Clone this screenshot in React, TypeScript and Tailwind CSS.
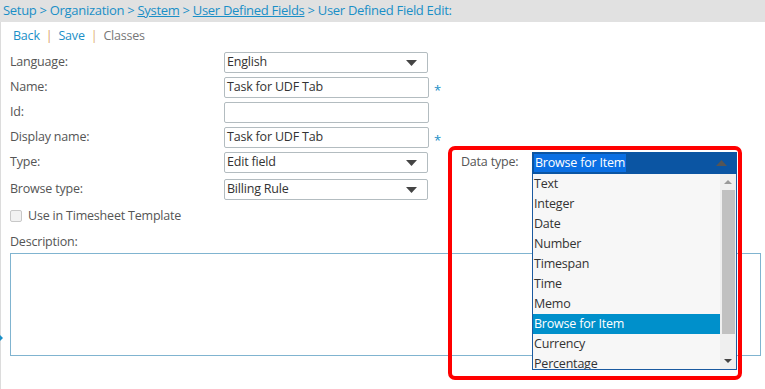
import React from "react";

const font = { fontFamily: '"Open Sans", "Liberation Sans", sans-serif' };

const Caret = ({ up = false }: { up?: boolean }) => (
  <svg width="11" height="6" viewBox="0 0 11 6" className="shrink-0">
    {up ? <path d="M0 6 L5.5 0 L11 6 Z" fill="#555" /> : <path d="M0 0 L11 0 L5.5 6 Z" fill="#444" />}
  </svg>
);

const txt = "text-[12.5px] tracking-[-0.2px]";

const Select = ({ value }: { value: string }) => (
  <div className="flex h-[21px] w-[204px] items-center justify-between rounded-[2px] border border-[#b3bcc0] bg-white pl-[2px] pr-[10px]">
    <span className={`${txt} leading-none text-[#333]`}>{value}</span>
    <Caret />
  </div>
);

const Input = ({ value = "", req = false }: { value?: string; req?: boolean }) => (
  <div className="flex items-center">
    <div className="flex h-[21px] w-[205px] items-center rounded-[2px] border border-[#b3bcc0] bg-white pl-[2px]">
      <span className={`${txt} leading-none text-[#333]`}>{value}</span>
    </div>
    {req && <span className="ml-[5px] mt-[5px] text-[13px] leading-none text-[#1a8fc7]">*</span>}
  </div>
);

const Row = ({ label, children, className = "" }: { label: string; children: React.ReactNode; className?: string }) => (
  <div className={`flex items-center ${className}`}>
    <div className={`w-[214px] ${txt} text-[#555]`}>{label}</div>
    {children}
  </div>
);

const items = ["Text", "Integer", "Date", "Number", "Timespan", "Time", "Memo", "Browse for Item", "Currency", "Percentage"];

export default function App() {
  return (
    <div className="relative h-[389px] w-[765px] overflow-hidden bg-white" style={font}>
      <div className="flex h-[22px] items-center bg-[#e1e1e1] pl-[3px] text-[13px] tracking-[-0.3px] text-[#1a8fc7]">
        <span>Setup &gt; Organization &gt; <span className="underline">System</span> &gt; <span className="underline">User Defined Fields</span> &gt; User Defined Field Edit:</span>
      </div>
      <div className="flex h-[367px] border-l border-[#dcdcdc]">
        <div className="flex w-full flex-col pl-[9px]">
          <div className={`mt-[5px] flex h-[18px] items-center gap-[6px] pl-[3px] ${txt}`}>
            <span className="text-[#1a8fc7]">Back</span>
            <span className="text-[#d9a066]">|</span>
            <span className="text-[#1a8fc7]">Save</span>
            <span className="text-[#e0b070]">|</span>
            <span className="text-[#777]">Classes</span>
          </div>
          <div className="mt-[7px] flex flex-col gap-[4px]">
            <Row label="Language:"><Select value="English" /></Row>
            <Row label="Name:"><Input value="Task for UDF Tab" req /></Row>
            <Row label="Id:"><Input /></Row>
            <Row label="Display name:"><Input value="Task for UDF Tab" req /></Row>
            <Row label="Type:"><Select value="Edit field" /></Row>
          </div>
          <Row label="Browse type:" className="mt-[6px]"><Select value="Billing Rule" /></Row>
          <div className={`mt-[6px] flex h-[20px] items-center gap-[6px] ${txt} text-[#555]`}>
            <div className="h-[12px] w-[12px] rounded-[2px] border border-[#c8c8c8] bg-[#f2f2f2]" />
            <span>Use in Timesheet Template</span>
          </div>
          <div className={`mt-[6px] h-[20px] leading-[20px] ${txt} text-[#555]`}>Description:</div>
          <div className="mt-[1px] h-[103px] w-[751px] border border-[#80b4d0]" />
        </div>
      </div>
      <div className="absolute left-0 top-[335px] h-0 w-0 border-y-[3px] border-l-[3px] border-y-transparent border-l-[#1a8fc7]" />

      <div className={`absolute left-[461px] top-[153px] ${txt} text-[#555]`}>Data type:</div>
      <div className="absolute left-[532px] top-[152px] w-[205px]">
        <div className="flex h-[22px] items-center justify-between bg-[#0b55a3] pl-[2px] pr-[10px]">
          <span className={`bg-[#0a6fe3] px-[1px] ${txt} leading-[18px] text-white`}>Browse for Item</span>
          <Caret up />
        </div>
        <div className="flex h-[196px] border border-t-0 border-[#1b5aa0] bg-[#f7f7f7]">
          <div className="flex flex-1 flex-col overflow-hidden">
            {items.map((it) => (
              <div
                key={it}
                className={`h-[20px] shrink-0 pl-[1px] ${txt} leading-[20px] ${it === "Browse for Item" ? "bg-[#0090cb] text-white" : "text-[#333]"}`}
              >
                {it}
              </div>
            ))}
          </div>
          <div className="flex w-[16px] flex-col items-center bg-[#efefef]">
            <div className="flex h-[16px] items-center"><svg width="8" height="4" viewBox="0 0 8 4"><path d="M0 4 L4 0 L8 4 Z" fill="#999" /></svg></div>
            <div className="h-[144px] w-[13px] bg-[#c1c1c1]" />
            <div className="flex-1" />
            <div className="flex h-[16px] items-center"><svg width="8" height="4" viewBox="0 0 8 4"><path d="M0 0 L8 0 L4 4 Z" fill="#444" /></svg></div>
          </div>
        </div>
      </div>
      <div className="pointer-events-none absolute left-[448px] top-[146px] h-[234px] w-[294px] rounded-[7px] border-4 border-[#ff0000]" />
    </div>
  );
}
